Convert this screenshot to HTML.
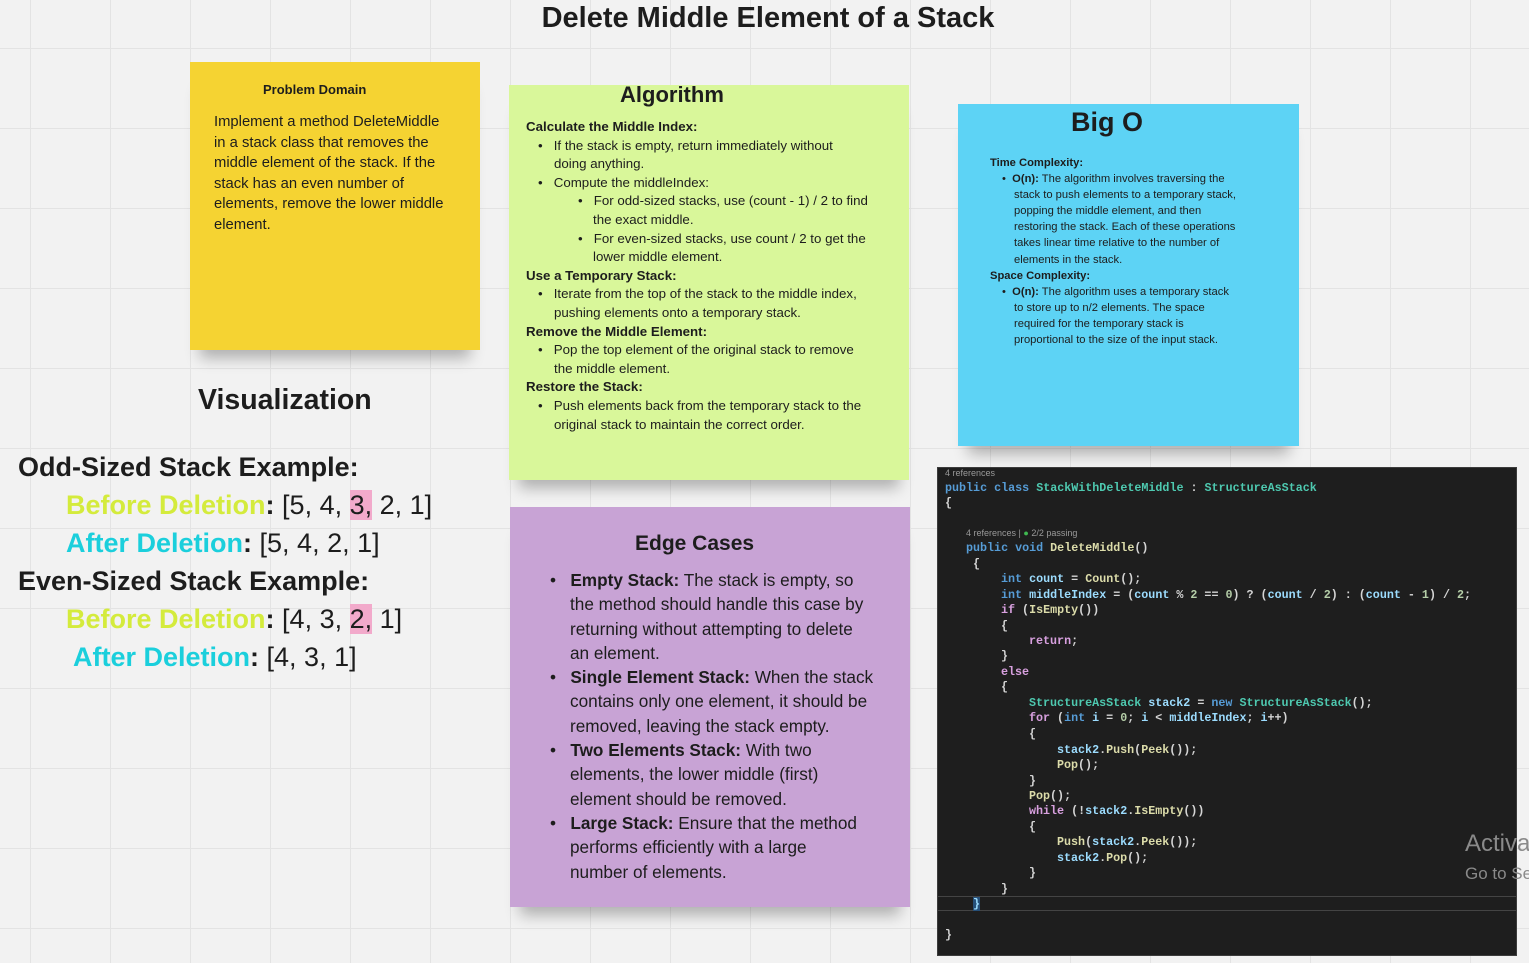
<!DOCTYPE html><html><head><meta charset="utf-8"><style>
body{margin:0;width:1529px;height:963px;overflow:hidden;position:relative;font-family:"Liberation Sans",sans-serif;color:#1d1d1d;
background-color:#f2f2f2;background-image:linear-gradient(to right,#e3e3e3 1px,transparent 1px),linear-gradient(to bottom,#e3e3e3 1px,transparent 1px);background-size:80px 80px;background-position:30px 48px}
.a{position:absolute;white-space:nowrap}
.note{position:absolute;box-shadow:0 18px 14px -10px rgba(0,0,0,.28)}
.b{font-weight:bold}
.code{position:absolute;left:937px;top:467px;width:578px;height:487px;background:#1e1e1e;border:1px solid #3c3c3c;font-family:"Liberation Mono",monospace;font-size:11.7px;color:#d4d4d4}
.code .a{font-weight:bold}
.k{color:#569cd6}.t{color:#4ec9b0}.m{color:#dcdcaa}.v{color:#9cdcfe}.c{color:#d8a0df}.n{color:#b5cea8}
.s{font-family:"Liberation Sans",sans-serif;font-size:9px;color:#999;font-weight:normal!important}
</style></head><body>
<div class="a b" style="left:0;width:1536px;text-align:center;top:2px;font-size:29px">Delete Middle Element of a Stack</div>

<div class="note" style="left:190px;top:62px;width:290px;height:288px;background:#f5d332"></div>
<div class="a b" style="left:263px;top:82px;font-size:13px">Problem Domain</div>
<div class="a" style="left:214px;top:112px;font-size:14.8px;line-height:20.5px">Implement a method DeleteMiddle<br>in a stack class that removes the<br>middle element of the stack. If the<br>stack has an even number of<br>elements, remove the lower middle<br>element.</div>

<div class="a b" style="left:198px;top:384px;font-size:28.5px">Visualization</div>
<div style="position:absolute;left:18px;top:448px;font-size:27px;line-height:38px">
<div class="b">Odd-Sized Stack Example:</div>
<div style="padding-left:48px"><span class="b" style="color:#d4eb3c">Before Deletion</span><b>:</b> [5, 4, <span style="background:#f2aacb">3,</span> 2, 1]</div>
<div style="padding-left:48px"><span class="b" style="color:#1bcfdc">After Deletion</span><b>:</b> [5, 4, 2, 1]</div>
<div class="b">Even-Sized Stack Example:</div>
<div style="padding-left:48px"><span class="b" style="color:#d4eb3c">Before Deletion</span><b>:</b> [4, 3, <span style="background:#f2aacb">2,</span> 1]</div>
<div style="padding-left:55px"><span class="b" style="color:#1bcfdc">After Deletion</span><b>:</b> [4, 3, 1]</div>
</div>

<div class="note" style="left:509px;top:85px;width:400px;height:395px;background:#d9f79a"></div>
<div class="a b" style="left:620px;top:82px;font-size:22px">Algorithm</div>
<div class="a" style="left:526px;top:118px;font-size:13.3px;line-height:18.6px">
<b>Calculate the Middle Index:</b><br>
<span style="padding-left:12px">•&nbsp;&nbsp; If the stack is empty, return immediately without</span><br>
<span style="padding-left:28px">doing anything.</span><br>
<span style="padding-left:12px">•&nbsp;&nbsp; Compute the middleIndex:</span><br>
<span style="padding-left:52px">•&nbsp;&nbsp; For odd-sized stacks, use (count - 1) / 2 to find</span><br>
<span style="padding-left:67px">the exact middle.</span><br>
<span style="padding-left:52px">•&nbsp;&nbsp; For even-sized stacks, use count / 2 to get the</span><br>
<span style="padding-left:67px">lower middle element.</span><br>
<b>Use a Temporary Stack:</b><br>
<span style="padding-left:12px">•&nbsp;&nbsp; Iterate from the top of the stack to the middle index,</span><br>
<span style="padding-left:28px">pushing elements onto a temporary stack.</span><br>
<b>Remove the Middle Element:</b><br>
<span style="padding-left:12px">•&nbsp;&nbsp; Pop the top element of the original stack to remove</span><br>
<span style="padding-left:28px">the middle element.</span><br>
<b>Restore the Stack:</b><br>
<span style="padding-left:12px">•&nbsp;&nbsp; Push elements back from the temporary stack to the</span><br>
<span style="padding-left:28px">original stack to maintain the correct order.</span>
</div>

<div class="note" style="left:958px;top:104px;width:341px;height:342px;background:#5dd3f5"></div>
<div class="a b" style="left:1071px;top:107px;font-size:27px">Big O</div>
<div class="a" style="left:990px;top:155px;font-size:11.2px;line-height:16.1px">
<b>Time Complexity:</b><br>
<span style="padding-left:12px">•&nbsp; <b>O(n):</b> The algorithm involves traversing the</span><br>
<span style="padding-left:24px">stack to push elements to a temporary stack,</span><br>
<span style="padding-left:24px">popping the middle element, and then</span><br>
<span style="padding-left:24px">restoring the stack. Each of these operations</span><br>
<span style="padding-left:24px">takes linear time relative to the number of</span><br>
<span style="padding-left:24px">elements in the stack.</span><br>
<b>Space Complexity:</b><br>
<span style="padding-left:12px">•&nbsp; <b>O(n):</b> The algorithm uses a temporary stack</span><br>
<span style="padding-left:24px">to store up to n/2 elements. The space</span><br>
<span style="padding-left:24px">required for the temporary stack is</span><br>
<span style="padding-left:24px">proportional to the size of the input stack.</span>
</div>

<div class="note" style="left:510px;top:507px;width:400px;height:400px;background:#c8a3d5"></div>
<div class="a b" style="left:635px;top:532px;font-size:21px">Edge Cases</div>
<div class="a" style="left:550px;top:568px;font-size:17.2px;line-height:24.3px">
•&nbsp;&nbsp; <b>Empty Stack:</b> The stack is empty, so<br>
<span style="padding-left:20px">the method should handle this case by</span><br>
<span style="padding-left:20px">returning without attempting to delete</span><br>
<span style="padding-left:20px">an element.</span><br>
•&nbsp;&nbsp; <b>Single Element Stack:</b> When the stack<br>
<span style="padding-left:20px">contains only one element, it should be</span><br>
<span style="padding-left:20px">removed, leaving the stack empty.</span><br>
•&nbsp;&nbsp; <b>Two Elements Stack:</b> With two<br>
<span style="padding-left:20px">elements, the lower middle (first)</span><br>
<span style="padding-left:20px">element should be removed.</span><br>
•&nbsp;&nbsp; <b>Large Stack:</b> Ensure that the method<br>
<span style="padding-left:20px">performs efficiently with a large</span><br>
<span style="padding-left:20px">number of elements.</span>
</div>

<div class="code">
<div class="a s" style="left:7px;top:0px">4 references</div>
<div class="a" style="left:7px;top:13px"><span class="k">public class</span> <span class="t">StackWithDeleteMiddle</span> : <span class="t">StructureAsStack</span></div>
<div class="a" style="left:7px;top:28px">{</div>
<div class="a s" style="left:28px;top:60px">4 references | <span style="color:#3fb950">●</span> 2/2 passing</div>
<div class="a" style="left:28px;top:73px"><span class="k">public void</span> <span class="m">DeleteMiddle</span>()</div>
<div class="a" style="left:35px;top:89px">{</div>
<div class="a" style="left:63px;top:104px"><span class="k">int</span> <span class="v">count</span> = <span class="m">Count</span>();</div>
<div class="a" style="left:63px;top:120px"><span class="k">int</span> <span class="v">middleIndex</span> = (<span class="v">count</span> % <span class="n">2</span> == <span class="n">0</span>) ? (<span class="v">count</span> / <span class="n">2</span>)  : (<span class="v">count</span> - <span class="n">1</span>) / <span class="n">2</span>;</div>
<div class="a" style="left:63px;top:135px"><span class="c">if</span> (<span class="m">IsEmpty</span>())</div>
<div class="a" style="left:63px;top:151px">{</div>
<div class="a" style="left:91px;top:166px"><span class="c">return</span>;</div>
<div class="a" style="left:63px;top:181px">}</div>
<div class="a" style="left:63px;top:197px"><span class="c">else</span></div>
<div class="a" style="left:63px;top:212px">{</div>
<div class="a" style="left:91px;top:228px"><span class="t">StructureAsStack</span> <span class="v">stack2</span> = <span class="k">new</span> <span class="t">StructureAsStack</span>();</div>
<div class="a" style="left:91px;top:243px"><span class="c">for</span> (<span class="k">int</span> <span class="v">i</span> = <span class="n">0</span>; <span class="v">i</span> &lt; <span class="v">middleIndex</span>; <span class="v">i</span>++)</div>
<div class="a" style="left:91px;top:259px">{</div>
<div class="a" style="left:119px;top:275px"><span class="v">stack2</span>.<span class="m">Push</span>(<span class="m">Peek</span>());</div>
<div class="a" style="left:119px;top:290px"><span class="m">Pop</span>();</div>
<div class="a" style="left:91px;top:306px">}</div>
<div class="a" style="left:91px;top:321px"><span class="m">Pop</span>();</div>
<div class="a" style="left:91px;top:336px"><span class="c">while</span> (!<span class="v">stack2</span>.<span class="m">IsEmpty</span>())</div>
<div class="a" style="left:91px;top:352px">{</div>
<div class="a" style="left:119px;top:367px"><span class="m">Push</span>(<span class="v">stack2</span>.<span class="m">Peek</span>());</div>
<div class="a" style="left:119px;top:383px"><span class="v">stack2</span>.<span class="m">Pop</span>();</div>
<div class="a" style="left:91px;top:398px">}</div>
<div class="a" style="left:63px;top:414px">}</div>
<div style="position:absolute;left:0;top:428px;width:578px;height:13px;border-top:1px solid #444;border-bottom:1px solid #444"></div>
<div class="a" style="left:35px;top:429px;color:#9cdcfe;background:#264f78">}</div>
<div class="a" style="left:7px;top:460px">}</div>
</div>
<div class="a" style="left:1465px;top:830px;font-size:24px;color:#8a8a8a">Activa</div>
<div class="a" style="left:1465px;top:864px;font-size:17px;color:#8a8a8a">Go to Se</div>
</body></html>
